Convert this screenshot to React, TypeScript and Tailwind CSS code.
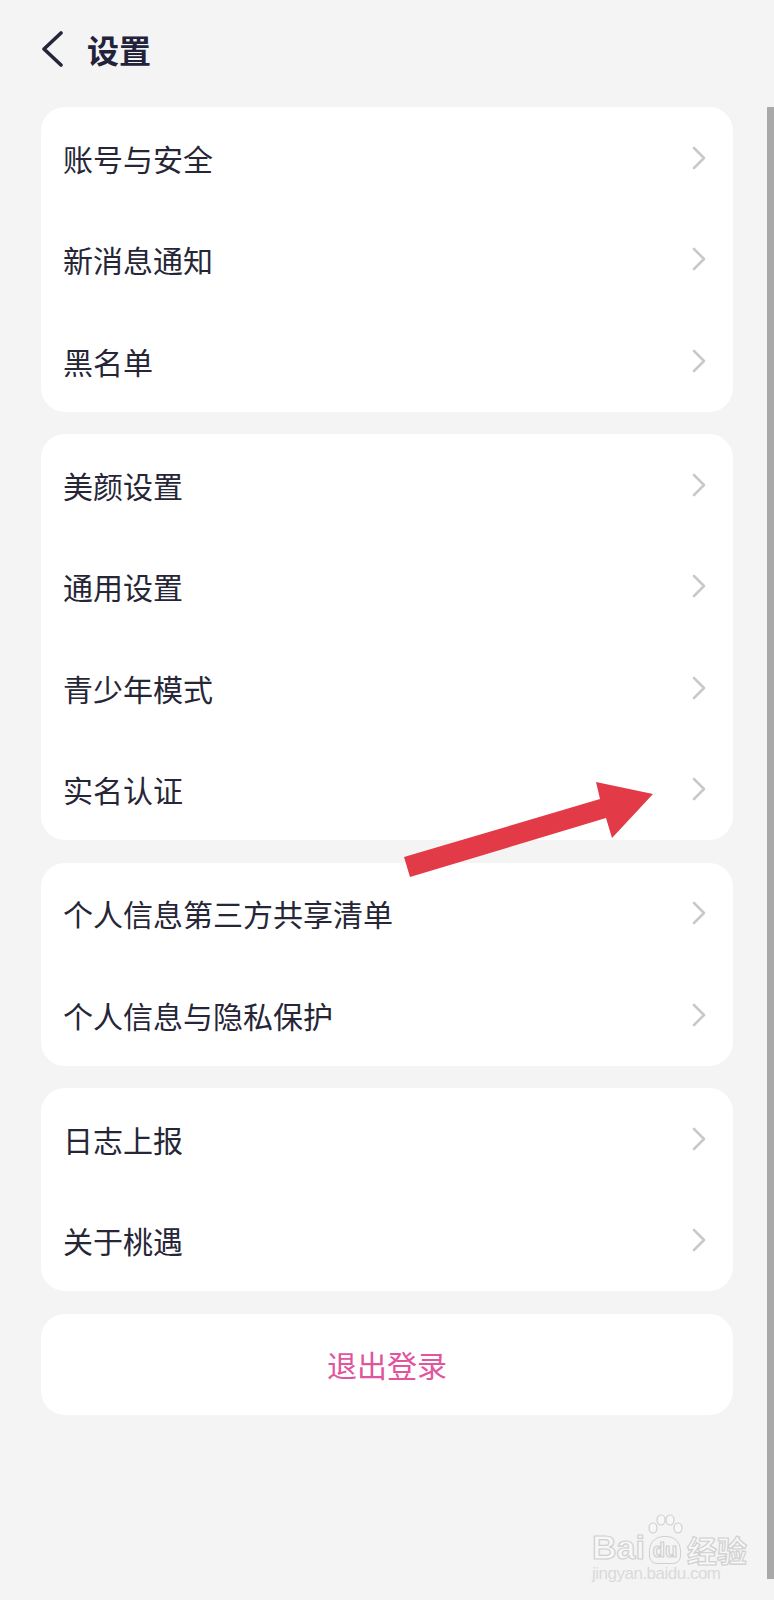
import React from "react";

const groups: string[][] = [
  ["账号与安全", "新消息通知", "黑名单"],
  ["美颜设置", "通用设置", "青少年模式", "实名认证"],
  ["个人信息第三方共享清单", "个人信息与隐私保护"],
  ["日志上报", "关于桃遇"],
];

function Chevron() {
  return (
    <svg width="16" height="24" viewBox="0 0 16 24" fill="none">
      <path
        d="M3 2 L13 12 L3 22"
        stroke="#c9c9cc"
        strokeWidth="2.6"
        strokeLinecap="round"
        strokeLinejoin="round"
      />
    </svg>
  );
}

function Row({ label }: { label: string }) {
  return (
    <div className="flex h-[101.5px] items-center justify-between pl-[22px] pr-[26px]">
      <span className="text-[30px] leading-none text-[#262637]">{label}</span>
      <Chevron />
    </div>
  );
}

const outline = { WebkitTextStroke: "1.2px #d0d0d0" };

export default function App() {
  return (
    <div
      className="relative h-[1600px] w-[774px] overflow-hidden bg-[#f4f4f4]"
      style={{ fontFamily: '"Noto Sans CJK SC", "Noto Sans", sans-serif' }}
    >
      {/* header */}
      <div className="flex h-[98px] items-center pl-[40px]">
        <svg width="26" height="36" viewBox="0 0 26 36" fill="none">
          <path
            d="M21 2 L4 18 L21 34"
            stroke="#25253a"
            strokeWidth="3.6"
            strokeLinecap="round"
            strokeLinejoin="round"
          />
        </svg>
        <span className="ml-[21px] text-[32px] font-bold leading-none text-[#22223a]">
          设置
        </span>
      </div>

      <div className="mt-[9px] flex flex-col gap-[22.5px] px-[41px]">
        {groups.map((g, i) => (
          <div key={i} className="rounded-[24px] bg-white">
            {g.map((label) => (
              <Row key={label} label={label} />
            ))}
          </div>
        ))}
        <div className="flex h-[101.5px] items-center justify-center rounded-[24px] bg-white">
          <span className="text-[30px] leading-none text-[#e0559c]">退出登录</span>
        </div>
      </div>

      {/* scrollbar */}
      <div className="absolute right-0 top-[107px] h-[1472px] w-[7px] bg-[#a9a9a9]" />

      {/* red annotation arrow */}
      <svg
        className="absolute left-0 top-0"
        width="774"
        height="1600"
        viewBox="0 0 774 1600"
        fill="none"
      >
        <polygon
          points="404,857 600,799 596,782 653,794 612,838 606,818 410,877"
          fill="#e33a47"
        />
      </svg>

      {/* watermark */}
      <div className="absolute left-[592px] top-[1514px] flex flex-col items-start">
        <div className="flex items-end">
          <span
            className="text-[34px] font-bold leading-none text-[#f7f7f7]"
            style={{ ...outline, fontFamily: '"Liberation Sans", sans-serif' }}
          >
            Bai
          </span>
          <div className="relative flex flex-col items-center">
            <svg width="40" height="22" viewBox="0 0 40 22" fill="none" stroke="#d0d0d0" strokeWidth="1.2">
              <ellipse cx="8" cy="14" rx="4" ry="5" fill="#f7f7f7" />
              <ellipse cx="16" cy="6" rx="4" ry="5" fill="#f7f7f7" />
              <ellipse cx="25" cy="6" rx="4" ry="5" fill="#f7f7f7" />
              <ellipse cx="33" cy="14" rx="4" ry="5" fill="#f7f7f7" />
            </svg>
            <span
              className="rounded-t-[14px] rounded-b-[8px] border border-[#d0d0d0] px-[3px] text-[20px] font-bold leading-[26px] text-[#f7f7f7]"
              style={{ ...outline, fontFamily: '"Liberation Sans", sans-serif' }}
            >
              du
            </span>
          </div>
          <span
            className="ml-[2px] text-[30px] font-bold leading-none text-[#f7f7f7]"
            style={outline}
          >
            经验
          </span>
        </div>
        <span
          className="mt-[1px] text-[17px] leading-none tracking-[-0.5px] text-[#dadada]"
          style={{ fontFamily: '"Liberation Sans", sans-serif' }}
        >
          jingyan.baidu.com
        </span>
      </div>
    </div>
  );
}
